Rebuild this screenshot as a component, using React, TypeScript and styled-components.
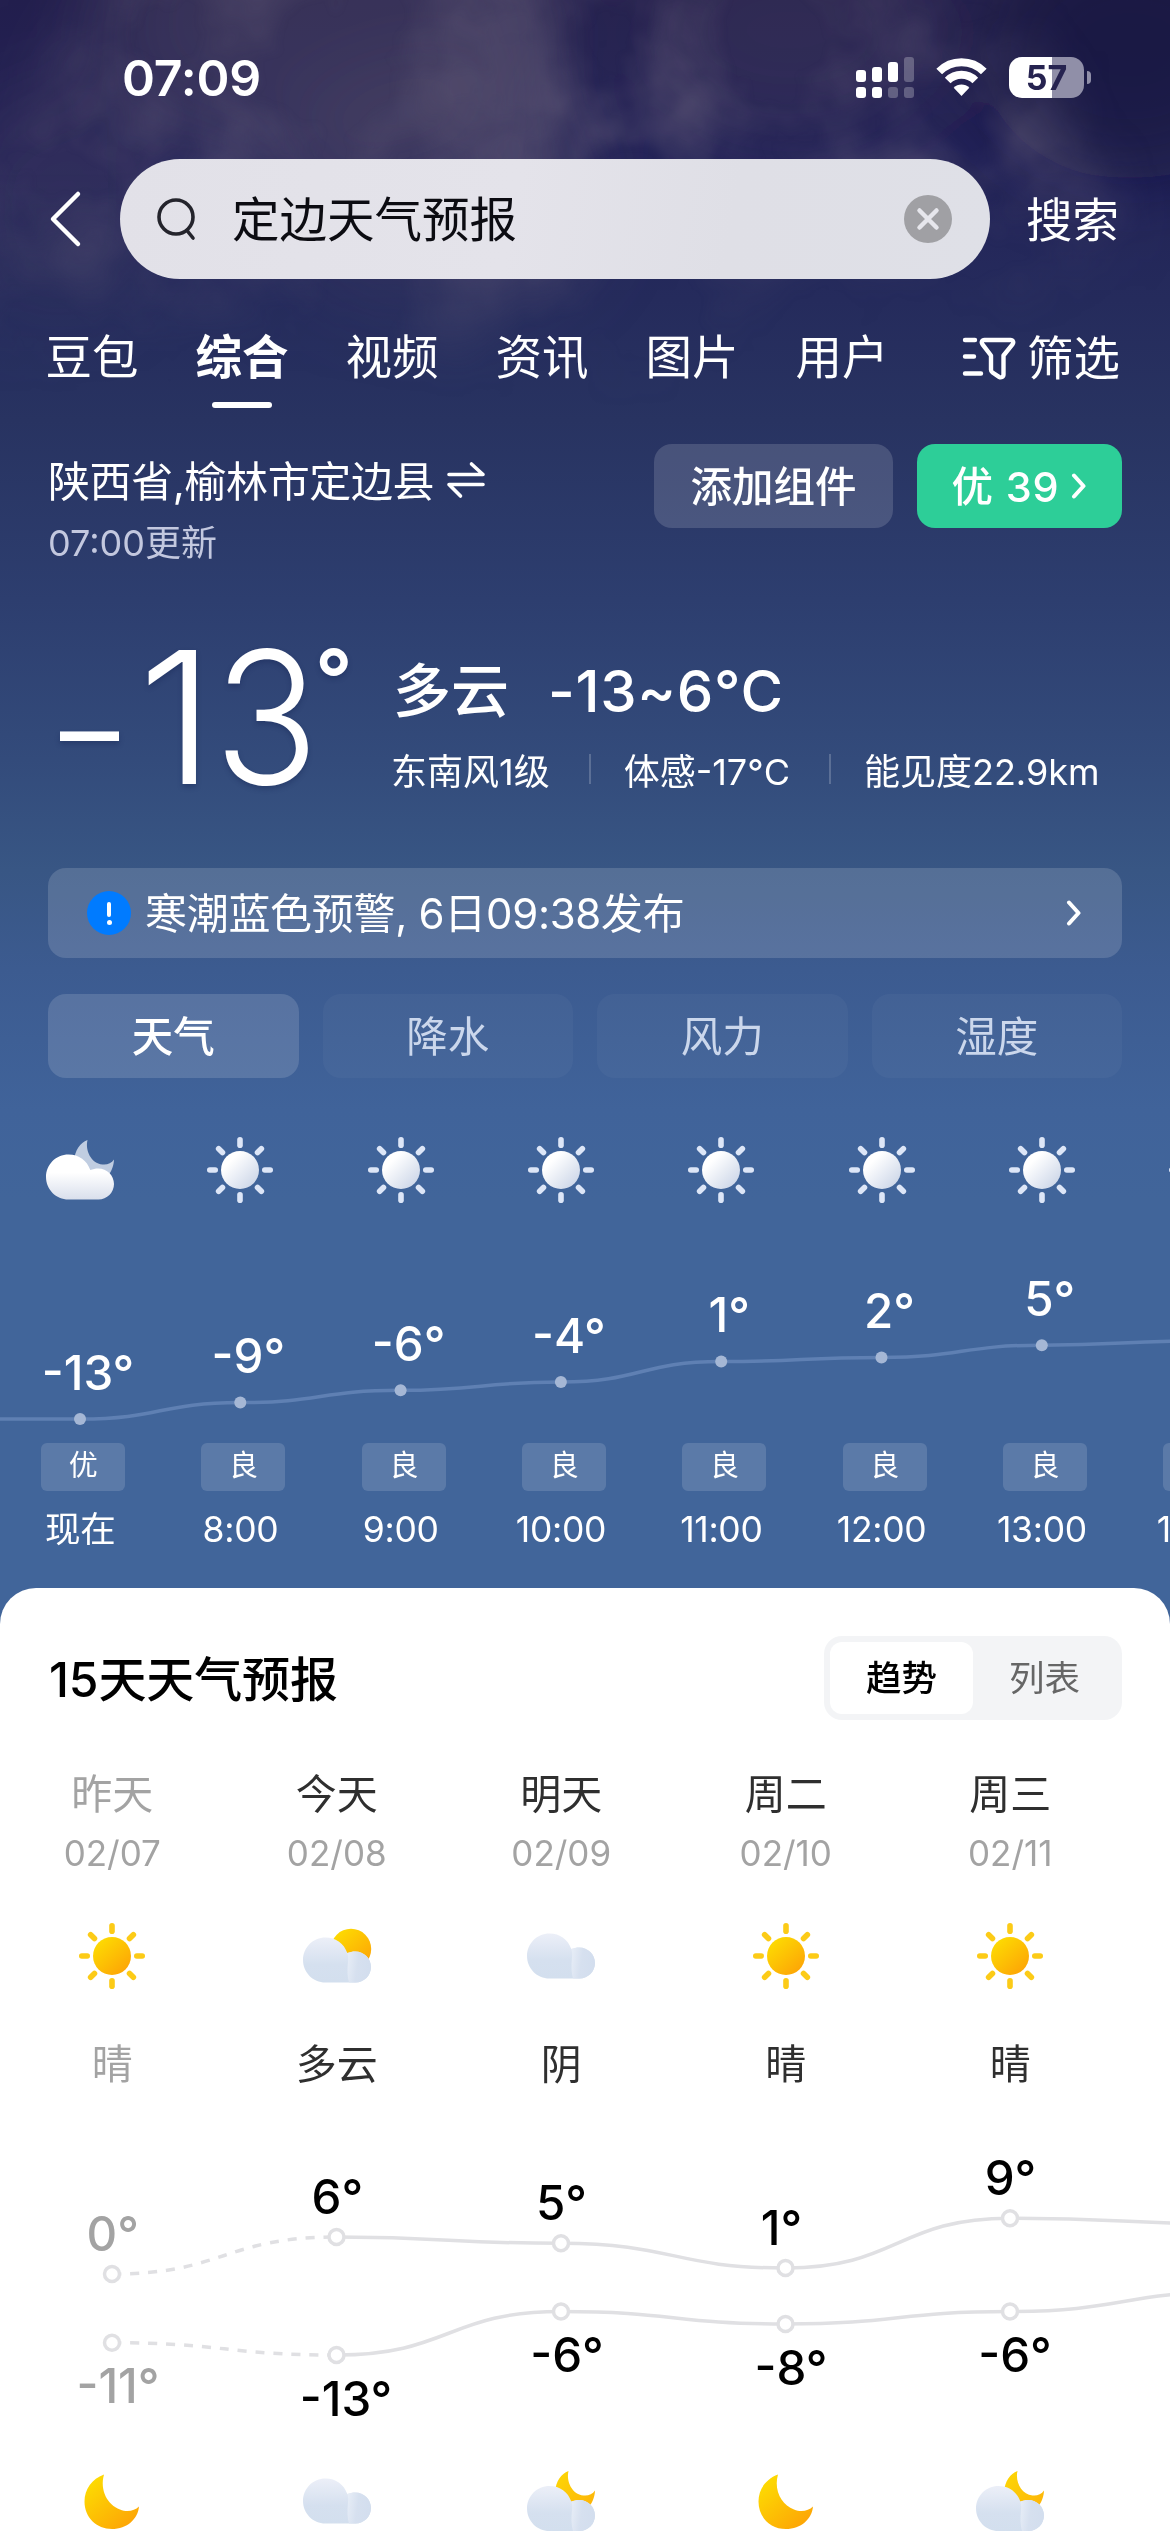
import React from "react";
import styled, { createGlobalStyle } from "styled-components";

const FONT = `Inter, "Noto Sans CJK SC", "Liberation Sans", sans-serif`;

const Global = createGlobalStyle`
  html, body { margin: 0; padding: 0; background: #fff; }
  * { box-sizing: border-box; }
  body { font-family: ${FONT}; -webkit-font-smoothing: antialiased; }
`;

const Screen = styled.main`
  position: relative;
  width: 1170px;
  height: 2532px;
  overflow: hidden;
  display: flex;
  flex-direction: column;
  color: #fff;
  background: linear-gradient(
    180deg,
    #231f4e 0px,
    #232358 160px,
    #252b5c 300px,
    #283361 420px,
    #2d3e6f 600px,
    #334b7b 760px,
    #385684 870px,
    #3c5b90 970px,
    #40639a 1110px,
    #41659a 1200px
  );
`;

const Sky = styled.svg`
  position: absolute;
  left: 0;
  top: 0;
  width: 1170px;
  height: 420px;
`;

const Front = styled.div`
  position: relative;
  flex: 1;
  display: flex;
  flex-direction: column;
`;

/* status bar */
const StatusBar = styled.header`
  height: 159px;
  padding: 0 79px 0 122px;
  display: flex;
  justify-content: space-between;
`;
const Clock = styled.time`
  padding-top: 48px;
  font-size: 50px;
  line-height: 60px;
  font-weight: 600;
  letter-spacing: -0.2px;
`;
const StatusIcons = styled.div`
  display: flex;
  align-items: flex-start;
  padding-top: 57px;
  gap: 22px;
`;
const Battery = styled.div`
  display: flex;
  align-items: center;
  gap: 3px;
`;
const BatteryBody = styled.div`
  width: 75px;
  height: 41px;
  border-radius: 13px;
  background: linear-gradient(90deg, #fff 57%, #908fa8 57%);
  color: #262350;
  font-size: 34px;
  font-weight: 700;
  line-height: 42px;
  text-align: center;
`;
const BatteryCap = styled.div`
  width: 4px;
  height: 13px;
  border-radius: 0 4px 4px 0;
  background: #908fa8;
`;

/* search */
const SearchRow = styled.div`
  display: flex;
  align-items: center;
  height: 120px;
  padding: 0 50px 0 48px;
`;
const BackIcon = styled.svg`
  width: 36px;
  height: 60px;
`;
const SearchField = styled.div`
  display: flex;
  align-items: center;
  width: 870px;
  height: 120px;
  margin: 0 36px;
  padding: 0 38px 0 36px;
  border-radius: 60px;
  background: linear-gradient(100deg, #e2e1e8, #e4e3ea 45%, #dfdfe6 70%, #dfe0e7);
  color: #0c0c12;
  font-size: 47.5px;
`;
const Query = styled.span`
  flex: 1;
  padding: 0 0 5px 32px;
`;
const SearchAction = styled.span`
  font-size: 46.5px;
  padding-bottom: 5px;
  white-space: nowrap;
`;

/* top tabs */
const TabBar = styled.nav`
  display: flex;
  height: 165px;
  padding: 43px 50px 0 17px;
  white-space: nowrap;
`;
const Tab = styled.div<{ $active?: boolean }>`
  display: flex;
  flex-direction: column;
  align-items: center;
  width: 150px;
  font-size: 46.5px;
  line-height: 70px;
  font-weight: ${(p) => (p.$active ? 700 : 400)};
  &::after {
    content: "";
    width: 60px;
    height: 6px;
    margin-top: 10px;
    border-radius: 3px;
    background: ${(p) => (p.$active ? "#fff" : "transparent")};
  }
`;
const Filter = styled.div`
  display: flex;
  align-items: center;
  gap: 11px;
  height: 72px;
  margin-left: auto;
  font-size: 46.5px;
  span { padding-bottom: 7px; }
`;

/* location */
const LocationRow = styled.section`
  display: flex;
  justify-content: space-between;
  height: 176px;
  padding: 0 48px;
`;
const Place = styled.div`
  padding-top: 6px;
`;
const PlaceName = styled.div`
  display: flex;
  align-items: center;
  gap: 13px;
  height: 60px;
  font-size: 42px;
  letter-spacing: -0.4px;
  span { padding-bottom: 4px; }
`;
const Updated = styled.div`
  height: 60px;
  font-size: 36px;
  line-height: 67px;
  color: #c3c8df;
`;
const Actions = styled.div`
  display: flex;
  gap: 24px;
`;
const Pill = styled.button<{ $w: number; $bg: string }>`
  display: flex;
  align-items: center;
  justify-content: center;
  gap: 12px;
  width: ${(p) => p.$w}px;
  height: 84px;
  padding: 0;
  border: 0;
  border-radius: 18px;
  background: ${(p) => p.$bg};
  color: #fff;
  font: 500 41.5px ${FONT};
  white-space: nowrap;
  span { padding-bottom: 4px; }
`;
const Score = styled.span`
  letter-spacing: 0.8px;
`;

/* current conditions */
const Current = styled.section`
  display: flex;
  height: 248px;
  padding: 0 48px;
`;
const BigTemp = styled.div`
  display: flex;
  align-items: flex-start;
  width: 344px;
  padding-left: 12px;
  text-shadow: 0 3px 5px rgba(20, 35, 80, 0.35);
`;
const BigGlyph = styled.span<{ $w: number; $size?: number; $drop?: number; $weight?: number; $squeeze?: number }>`
  width: ${(p) => p.$w}px;
  height: 150px;
  margin-top: ${(p) => p.$drop ?? 22}px;
  line-height: 150px;
  font-size: ${(p) => p.$size ?? 184}px;
  font-weight: ${(p) => p.$weight ?? 300};
  transform: scaleX(${(p) => p.$squeeze ?? 1});
  transform-origin: 0 50%;
`;
const Degree = styled.span`
  height: 60px;
  margin-top: 29px;
  font-size: 82px;
  font-weight: 600;
  line-height: 60px;
`;
const Conditions = styled.div`
  display: flex;
  flex-direction: column;
  white-space: nowrap;
`;
const Headline = styled.div`
  display: flex;
  gap: 39px;
  height: 84px;
  margin-top: 29px;
  padding-left: 1px;
  line-height: 84px;
  font-size: 58px;
  font-weight: 500;
  span + span { letter-spacing: 0.7px; }
`;
const Details = styled.div`
  display: flex;
  align-items: center;
  height: 72px;
  margin-left: -1px;
  font-size: 36px;
`;
const Rule = styled.i`
  width: 2px;
  height: 30px;
  margin: 0 33px 0 39px;
  background: rgba(255, 255, 255, 0.2);
`;

/* alert */
const Alert = styled.section`
  display: flex;
  align-items: center;
  height: 90px;
  margin: 0 48px 36px;
  padding: 0 40px 0 39px;
  border-radius: 18px;
  background: rgba(255, 255, 255, 0.15);
  font-size: 42px;
  span { flex: 1; padding: 0 0 5px 14px; letter-spacing: -0.3px; }
`;
const AlertDot = styled.i`
  width: 44px;
  height: 44px;
  border-radius: 50%;
  background: #007bff;
  display: flex;
  flex-direction: column;
  align-items: center;
  justify-content: center;
  gap: 3px;
  &::before { content: ""; width: 4px; height: 15px; border-radius: 2px; background: #fff; }
  &::after { content: ""; width: 5px; height: 5px; border-radius: 50%; background: #fff; }
`;

/* metric tabs */
const Metrics = styled.div`
  display: grid;
  grid-template-columns: repeat(4, 1fr);
  gap: 24px;
  padding: 0 48px;
`;
const Metric = styled.div<{ $active?: boolean }>`
  height: 84px;
  border-radius: 18px;
  line-height: 86px;
  text-align: center;
  font-size: 41.5px;
  font-weight: ${(p) => (p.$active ? 500 : 400)};
  color: ${(p) => (p.$active ? "#fff" : "#cbd7ec")};
  background: rgba(255, 255, 255, ${(p) => (p.$active ? 0.14 : 0.035)});
`;

/* hourly */
const HourIcons = styled.div`
  display: grid;
  grid-template-columns: repeat(8, 160.3px);
  justify-items: center;
  height: 162px;
  padding-top: 54px;
`;
const HourChart = styled.svg`
  display: block;
  flex: none;
  width: 1170px;
  height: 203px;
`;
const HourFooter = styled.div`
  display: grid;
  grid-template-columns: repeat(8, 160.3px);
  height: 145px;
`;
const Hour = styled.div`
  display: flex;
  flex-direction: column;
  align-items: center;
  font-size: 35.5px;
  letter-spacing: -0.3px;
`;
const Quality = styled.span`
  width: 84px;
  height: 48px;
  margin: 0 0 0 6px;
  border-radius: 6px;
  background: rgba(255, 255, 255, 0.14);
  font-size: 29px;
  line-height: 45px;
  text-align: center;
`;
const HourTime = styled.span`
  height: 80px;
  line-height: 78px;
`;

/* forecast */
const Forecast = styled.section`
  flex: 1;
  border-radius: 36px 36px 0 0;
  background: #fff;
  color: #000;
`;
const ForecastHead = styled.div`
  display: flex;
  justify-content: space-between;
  align-items: center;
  padding: 48px 48px 0 48px;
`;
const Title = styled.h2`
  margin: 0;
  padding: 0 0 4px 1px;
  font-size: 48px;
  font-weight: 500;
  letter-spacing: -0.1px;
`;
const Switch = styled.div`
  display: flex;
  width: 298px;
  height: 84px;
  padding: 6px;
  border-radius: 18px;
  background: #f3f4f6;
`;
const SwitchItem = styled.span<{ $on?: boolean }>`
  flex: 1;
  border-radius: 12px;
  font-size: 35.5px;
  line-height: 73px;
  text-align: center;
  font-weight: ${(p) => (p.$on ? 500 : 400)};
  color: ${(p) => (p.$on ? "#000" : "#666")};
  background: ${(p) => (p.$on ? "#fff" : "transparent")};
`;
const Days = styled.div`
  display: grid;
  grid-template-columns: repeat(5, 224.5px);
  height: 379.5px;
  padding-top: 44px;
`;
const Day = styled.div<{ $past?: boolean }>`
  display: flex;
  flex-direction: column;
  align-items: center;
  font-size: 41px;
  color: ${(p) => (p.$past ? "#a3a3a3" : "#2f2f2f")};
`;
const DayName = styled.span`
  height: 60px;
  line-height: 60px;
`;
const DayDate = styled.span`
  height: 60px;
  line-height: 58px;
  font-size: 35px;
  color: #a3a3a3;
`;
const DayIcon = styled.span`
  height: 150px;
  padding-top: 34px;
`;
const TempChart = styled.svg`
  display: block;
  width: 1170px;
  height: 360px;
`;
const Nights = styled.div`
  display: grid;
  grid-template-columns: repeat(5, 224.5px);
  justify-items: center;
  padding-top: 3px;
`;

type Kind = "sun" | "cloud" | "cloudSun" | "moon" | "cloudMoon" | "paleSun" | "paleCloudMoon";

const IconBox = styled.svg`
  display: block;
  width: 76px;
  height: 76px;
  overflow: visible;
`;

const HiddenDefs = styled.svg`
  position: absolute;
  width: 0;
  height: 0;
`;

const RAYS = [0, 45, 90, 135, 180, 225, 270, 315];

const Sun = ({ disc, ray }: { disc: string; ray: string }) => (
  <g>
    {RAYS.map((a) => (
      <rect key={a} x={35.2} y={5} width={5.6} height={11} rx={2.8} fill={ray} transform={`rotate(${a} 38 38)`} />
    ))}
    <circle cx={38} cy={38} r={19} fill={disc} />
  </g>
);

const CLOUD =
  "M22.5 0C33 0 41 6 44.3 15.6C46.7 14.6 49.4 14 52.2 14C61 14 68 21 68 29.5C68 38 61 45 52.5 45H22.5C10 45 0 35 0 22.5C0 10 10 0 22.5 0Z";
const PUFF =
  "M44.3 15.6C46.7 14.6 49.4 14 52.2 14C61 14 68 21 68 29.5C68 38 61 45 52.5 45H46C44.5 40 44 33 45 24C45.5 20 45 18 44.3 15.6Z";
const SMALL_MOON = "M16.5 0C14 10 20 23.5 31.5 24.5C36 25 40.5 23.5 43 19.5C42.5 31 36 42 20 42C8 42 2 32 3 21C4 10 9 3 16.5 0Z";

const Cloud = ({ x, y, pale }: { x: number; y: number; pale?: boolean }) => (
  <g transform={`translate(${x} ${y})`}>
    <path d={CLOUD} fill={pale ? "url(#paleCloud)" : "url(#cloud)"} />
    {!pale && <path d={PUFF} fill="url(#puff)" />}
  </g>
);

const WeatherIcon = ({ kind }: { kind: Kind }) => (
  <IconBox viewBox="0 0 76 76">
    {kind === "sun" && <Sun disc="url(#gold)" ray="#fccb17" />}
    {kind === "paleSun" && <Sun disc="url(#silver)" ray="#dde6f7" />}
    {kind === "cloud" && <Cloud x={4} y={15.5} />}
    {kind === "cloudSun" && (
      <>
        <circle cx={52} cy={31} r={20.2} fill="url(#gold)" />
        <Cloud x={4} y={19.5} />
      </>
    )}
    {kind === "moon" && (
      <path
        d="M30 11.5C18 16 10.5 26 10.5 38.5C10.5 54.5 22.5 66 38 66C53 66 64 56 65 43.5C60.5 48 53 49.5 46 46.5C33.5 42 25.5 27 30 11.5Z"
        fill="url(#gold)"
      />
    )}
    {kind === "cloudMoon" && (
      <>
        <path d={SMALL_MOON} transform="translate(29 8)" fill="url(#goldMoon)" />
        <Cloud x={4} y={23} />
      </>
    )}
    {kind === "paleCloudMoon" && (
      <>
        <path d={SMALL_MOON} transform="translate(29 8)" fill="#c0cde1" />
        <Cloud x={4} y={22.5} pale />
      </>
    )}
  </IconBox>
);

const IconDefs = () => (
  <HiddenDefs>
    <defs>
      <linearGradient id="gold" x1="0.1" y1="0.1" x2="0.85" y2="0.95">
        <stop offset="0" stopColor="#fddc02" />
        <stop offset="1" stopColor="#fda406" />
      </linearGradient>
      <linearGradient id="goldMoon" x1="0" y1="0" x2="1" y2="1">
        <stop offset="0" stopColor="#fdd905" />
        <stop offset="1" stopColor="#fdb00a" />
      </linearGradient>
      <linearGradient id="silver" x1="0.1" y1="0.1" x2="0.9" y2="0.9">
        <stop offset="0.2" stopColor="#ffffff" />
        <stop offset="1" stopColor="#ccd6e8" />
      </linearGradient>
      <linearGradient id="cloud" x1="0" y1="0" x2="0" y2="1">
        <stop offset="0" stopColor="#eceff8" />
        <stop offset="0.6" stopColor="#d5e0ef" />
        <stop offset="1" stopColor="#d3dfee" />
      </linearGradient>
      <linearGradient id="puff" x1="0" y1="0" x2="1" y2="0.2">
        <stop offset="0" stopColor="#e8eef7" />
        <stop offset="0.5" stopColor="#d6e0ef" />
        <stop offset="1" stopColor="#d3deee" />
      </linearGradient>
      <linearGradient id="paleCloud" x1="0" y1="0" x2="0" y2="1">
        <stop offset="0.4" stopColor="#ffffff" />
        <stop offset="1" stopColor="#d9dfec" />
      </linearGradient>
    </defs>
  </HiddenDefs>
);

const Chevron = () => (
  <svg width="16" height="26" viewBox="0 0 16 26" fill="none" stroke="#fff" strokeWidth="4" strokeLinecap="round" strokeLinejoin="round">
    <path d="M3 2.5L12.5 13L3 23.5" />
  </svg>
);

type Pt = [number, number];
const smooth = (pts: Pt[]) =>
  pts
    .map(([x, y], i) => {
      if (i === 0) return `M${x} ${y}`;
      const [px, py] = pts[i - 1];
      const m = (px + x) / 2;
      return `C${m} ${py} ${m} ${y} ${x} ${y}`;
    })
    .join("");

const hours: { t: string; temp: string; y: number; q: string; icon: Kind }[] = [
  { t: "现在", temp: "-13°", y: 1419, q: "优", icon: "paleCloudMoon" },
  { t: "8:00", temp: "-9°", y: 1402.6, q: "良", icon: "paleSun" },
  { t: "9:00", temp: "-6°", y: 1390.3, q: "良", icon: "paleSun" },
  { t: "10:00", temp: "-4°", y: 1382, q: "良", icon: "paleSun" },
  { t: "11:00", temp: "1°", y: 1361.6, q: "良", icon: "paleSun" },
  { t: "12:00", temp: "2°", y: 1357.5, q: "良", icon: "paleSun" },
  { t: "13:00", temp: "5°", y: 1345.2, q: "良", icon: "paleSun" },
  { t: "14:00", temp: "", y: 1341, q: "良", icon: "paleSun" },
];

const days: { n: string; d: string; c: string; icon: Kind; night: Kind; hi: string; lo: string; hy: number; ly: number; hx: number; lx: number }[] = [
  { n: "昨天", d: "02/07", c: "晴", icon: "sun", night: "moon", hi: "0°", lo: "-11°", hy: 2274, ly: 2342.7, hx: 112.7, lx: 118 },
  { n: "今天", d: "02/08", c: "多云", icon: "cloudSun", night: "cloud", hi: "6°", lo: "-13°", hy: 2237, ly: 2355, hx: 337.4, lx: 346 },
  { n: "明天", d: "02/09", c: "阴", icon: "cloud", night: "cloudMoon", hi: "5°", lo: "-6°", hy: 2243.3, ly: 2311.5, hx: 561.5, lx: 567 },
  { n: "周二", d: "02/10", c: "晴", icon: "sun", night: "moon", hi: "1°", lo: "-8°", hy: 2268, ly: 2324, hx: 781.5, lx: 791 },
  { n: "周三", d: "02/11", c: "晴", icon: "sun", night: "cloudMoon", hi: "9°", lo: "-6°", hy: 2218.2, ly: 2311.5, hx: 1010.5, lx: 1015 },
];

const hx = (i: number) => 80 + i * 160.3;
const dx = (i: number) => 112 + i * 224.5;

export default function App() {
  const hourPts: Pt[] = hours.map((h, i) => [hx(i), h.y]);
  const highs: Pt[] = [...days.map((d, i): Pt => [dx(i), d.hy]), [dx(5), 2224]];
  const lows: Pt[] = [...days.map((d, i): Pt => [dx(i), d.ly]), [dx(5), 2292]];

  return (
    <>
      <Global />
      <IconDefs />
      <Screen>
        <Sky viewBox="0 0 1170 420">
          <defs>
            <filter id="haze" x="-20%" y="-20%" width="140%" height="140%">
              <feGaussianBlur stdDeviation="42" />
            </filter>
            <filter id="wisps" x="-20%" y="-20%" width="140%" height="140%" colorInterpolationFilters="sRGB">
              <feGaussianBlur in="SourceGraphic" stdDeviation="30" result="soft" />
              <feTurbulence type="fractalNoise" baseFrequency="0.007 0.007" numOctaves="5" seed="4" />
              <feColorMatrix type="matrix" values="0 0 0 0 0.4  0 0 0 0 0.37  0 0 0 0 0.48  3 0 0 0 -1.15" result="noise" />
              <feComposite in="noise" in2="soft" operator="in" />
              <feGaussianBlur stdDeviation="3" />
            </filter>
            <linearGradient id="fade" x1="0" y1="0" x2="0" y2="1">
              <stop offset="0.4" stopColor="#fff" />
              <stop offset="0.98" stopColor="#000" />
            </linearGradient>
            <mask id="fadeMask">
              <rect width="1170" height="420" fill="url(#fade)" />
            </mask>
          </defs>
          <g mask="url(#fadeMask)">
            <g filter="url(#haze)" fill="#6b6070">
              <ellipse cx="330" cy="20" rx="230" ry="150" opacity="0.3" />
              <ellipse cx="440" cy="200" rx="170" ry="130" opacity="0.24" />
              <ellipse cx="60" cy="210" rx="110" ry="130" opacity="0.18" />
              <ellipse cx="790" cy="30" rx="150" ry="110" opacity="0.18" />
              <ellipse cx="1130" cy="50" rx="150" ry="130" fill="#140e3c" opacity="0.55" />
            </g>
            <g filter="url(#wisps)" fill="#000">
              <ellipse cx="380" cy="120" rx="330" ry="210" opacity="0.4" />
              <ellipse cx="100" cy="260" rx="150" ry="120" opacity="0.36" />
              <ellipse cx="800" cy="130" rx="260" ry="150" opacity="0.4" />
              <ellipse cx="560" cy="320" rx="170" ry="70" opacity="0.4" />
              <ellipse cx="1010" cy="210" rx="110" ry="70" opacity="0.36" />
            </g>
          </g>
        </Sky>
        <Front>
          <StatusBar>
            <Clock>07:09</Clock>
            <StatusIcons>
              <svg width="58" height="41" viewBox="0 0 58 41" fill="#fff">
                <rect x="0" y="13" width="10" height="12" rx="3" />
                <rect x="16" y="10" width="10" height="15" rx="3" />
                <rect x="32" y="5" width="10" height="20" rx="3" />
                <rect x="48" y="0" width="10" height="25" rx="3" opacity="0.25" />
                <rect x="0" y="30" width="10" height="11" rx="3" />
                <rect x="16" y="30" width="10" height="11" rx="3" />
                <rect x="32" y="30" width="10" height="11" rx="3" opacity="0.25" />
                <rect x="48" y="30" width="10" height="11" rx="3" opacity="0.25" />
              </svg>
              <svg width="51" height="41" viewBox="0 0 51 41" fill="none" stroke="#fff" strokeWidth="8">
                <path d="M3.2 14.5A31.5 31.5 0 0 1 47.8 14.5" />
                <path d="M11.7 23.5A19.5 19.5 0 0 1 39.3 23.5" />
                <path d="M25.5 39L17.7 30.8A11 11 0 0 1 33.3 30.8Z" fill="#fff" stroke="none" />
              </svg>
              <Battery>
                <BatteryBody>57</BatteryBody>
                <BatteryCap />
              </Battery>
            </StatusIcons>
          </StatusBar>

          <SearchRow>
            <BackIcon viewBox="0 0 36 60" fill="none" stroke="#fff" strokeWidth="4.5" strokeLinecap="round" strokeLinejoin="round">
              <path d="M30 5L5 30L30 55" />
            </BackIcon>
            <SearchField>
              <svg width="44" height="46" viewBox="0 0 44 46" fill="none" stroke="#24242c" strokeWidth="3.6" strokeLinecap="round">
                <circle cx="20" cy="21" r="17" />
                <path d="M31 34.5L37 42" />
              </svg>
              <Query>定边天气预报</Query>
              <svg width="48" height="48" viewBox="0 0 48 48">
                <circle cx="24" cy="24" r="24" fill="#a0a0a4" />
                <path d="M15.5 15.5L32.5 32.5M32.5 15.5L15.5 32.5" stroke="#e6e6ec" strokeWidth="4.5" strokeLinecap="round" />
              </svg>
            </SearchField>
            <SearchAction>搜索</SearchAction>
          </SearchRow>

          <TabBar>
            {["豆包", "综合", "视频", "资讯", "图片", "用户"].map((t, i) => (
              <Tab key={t} $active={i === 1}>{t}</Tab>
            ))}
            <Filter>
              <svg width="54" height="44" viewBox="0 0 54 44" fill="none" stroke="#fff" strokeWidth="4.4" strokeLinecap="round" strokeLinejoin="round">
                <path d="M3 4H13M3 20.5H12M3 37.5H19" />
                <path d="M22.5 4H48.5C51 4 52 6.5 50.5 8.3L41.5 19.5V38.5C41.5 41.2 39 42 37 40.8L30.5 36.5C29.5 35.8 29 35 29 33.8V19.5L20.5 8.3C19 6.5 20 4 22.5 4Z" />
              </svg>
              <span>筛选</span>
            </Filter>
          </TabBar>

          <LocationRow>
            <Place>
              <PlaceName>
                <span>陕西省,榆林市定边县</span>
                <svg width="38" height="38" viewBox="0 0 38 38" fill="none" stroke="#fff" strokeWidth="3.6" strokeLinecap="round" strokeLinejoin="round">
                  <path d="M2 13.5H36L24.5 3" />
                  <path d="M36 23.5H2L13.5 35" />
                </svg>
              </PlaceName>
              <Updated>07:00更新</Updated>
            </Place>
            <Actions>
              <Pill $w={239} $bg="rgba(255,255,255,0.15)"><span>添加组件</span></Pill>
              <Pill $w={205} $bg="#2dce98"><Score>优 39</Score><Chevron /></Pill>
            </Actions>
          </LocationRow>

          <Current>
            <BigTemp>
              <BigGlyph $w={78} $size={118} $drop={35} $weight={400}>–</BigGlyph>
              <BigGlyph $w={76} $squeeze={1.06}>1</BigGlyph>
              <BigGlyph $w={101} $squeeze={0.94}>3</BigGlyph>
              <Degree>°</Degree>
            </BigTemp>
            <Conditions>
              <Headline>
                <span>多云</span>
                <span>-13~6°C</span>
              </Headline>
              <Details>
                东南风1级<Rule />体感-17°C<Rule />能见度22.9km
              </Details>
            </Conditions>
          </Current>

          <Alert>
            <AlertDot />
            <span>寒潮蓝色预警, 6日09:38发布</span>
            <Chevron />
          </Alert>

          <Metrics>
            {["天气", "降水", "风力", "湿度"].map((m, i) => (
              <Metric key={m} $active={i === 0}>{m}</Metric>
            ))}
          </Metrics>

          <HourIcons>
            {hours.map((h) => <WeatherIcon key={h.t} kind={h.icon} />)}
          </HourIcons>
          <HourChart viewBox="0 1240 1170 203">
            <path d={`M0 1419H80${smooth(hourPts).replace(/^M[^C]+/, "")}`} fill="none" stroke="#5f80b3" strokeWidth="3.5" />
            {hours.slice(0, 7).map((h, i) => (
              <g key={h.t}>
                <circle cx={hx(i)} cy={h.y} r="6" fill="#a5b7d5" />
                <text x={hx(i) + 8} y={h.y - 29.5} textAnchor="middle" fontSize="47.5" fontWeight="500" fill="#fff">{h.temp}</text>
              </g>
            ))}
          </HourChart>
          <HourFooter>
            {hours.map((h) => (
              <Hour key={h.t}>
                <Quality>{h.q}</Quality>
                <HourTime>{h.t}</HourTime>
              </Hour>
            ))}
          </HourFooter>

          <Forecast>
            <ForecastHead>
              <Title>15天天气预报</Title>
              <Switch>
                <SwitchItem $on>趋势</SwitchItem>
                <SwitchItem>列表</SwitchItem>
              </Switch>
            </ForecastHead>
            <Days>
              {days.map((d, i) => (
                <Day key={d.d} $past={i === 0}>
                  <DayName>{d.n}</DayName>
                  <DayDate>{d.d}</DayDate>
                  <DayIcon><WeatherIcon kind={d.icon} /></DayIcon>
                  <DayName>{d.c}</DayName>
                </Day>
              ))}
            </Days>
            <TempChart viewBox="0 2100 1170 360">
              {[highs, lows].map((pts, k) => (
                <g key={k} fill="none" stroke="#e0e0e3" strokeWidth="3.5">
                  <path d={smooth(pts.slice(0, 2))} strokeDasharray="9 9" strokeDashoffset="-18" />
                  <path d={smooth(pts.slice(1))} />
                  {pts.slice(0, 5).map(([x, y]) => (
                    <circle key={x} cx={x} cy={y} r="7.5" fill="#fff" />
                  ))}
                </g>
              ))}
              {days.map((d, i) => (
                <g key={d.d} textAnchor="middle" fontSize="47.5" fontWeight="500" fill={i === 0 ? "#a3a3a3" : "#000"}>
                  <text x={d.hx} y={d.hy - 23}>{d.hi}</text>
                  <text x={d.lx} y={d.ly + 60.5}>{d.lo}</text>
                </g>
              ))}
            </TempChart>
            <Nights>
              {days.map((d) => <WeatherIcon key={d.d} kind={d.night} />)}
            </Nights>
          </Forecast>
        </Front>
      </Screen>
    </>
  );
}
